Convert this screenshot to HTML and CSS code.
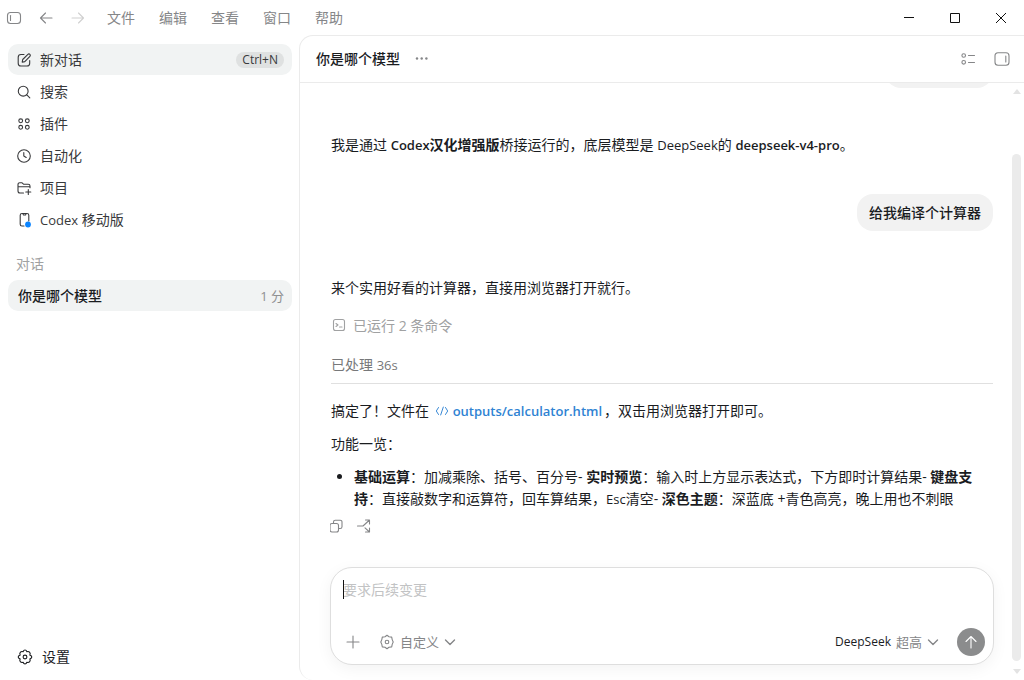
FILE: index.html
```
<!DOCTYPE html>
<html lang="zh-CN">

<head>
  <meta charset="UTF-8">
  <meta name="viewport" content="width=device-width, initial-scale=1.0">
  <title>你是哪个模型</title>
  <link rel="stylesheet" href="styles.css">
</head>

<body>

  <header class="titlebar">
    <button class="icon-btn" aria-label="切换侧边栏">
      <svg viewBox="0 0 16 16"><rect x="1.5" y="2.5" width="13" height="11" rx="3" /><path d="M4.5 5.5v5" /></svg>
    </button>
    <button class="icon-btn" aria-label="后退">
      <svg viewBox="0 0 16 16"><path d="M14 8H2.500M7.500 3L2.500 8l5 5" /></svg>
    </button>
    <button class="icon-btn disabled" aria-label="前进">
      <svg viewBox="0 0 16 16"><path d="M2 8h11.500M8.500 3l5 5-5 5" /></svg>
    </button>
    <nav class="menu">
      <button>文件</button>
      <button>编辑</button>
      <button>查看</button>
      <button>窗口</button>
      <button>帮助</button>
    </nav>
    <div class="window-controls">
      <button aria-label="最小化"><svg viewBox="0 0 12 12"><path d="M1 5.500h10" /></svg></button>
      <button aria-label="最大化"><svg viewBox="0 0 12 12"><rect x="1.5" y="1.5" width="9" height="9" /></svg></button>
      <button aria-label="关闭"><svg viewBox="0 0 12 12"><path d="M1 1l10 10M11 1L1 11" /></svg></button>
    </div>
  </header>

  <div class="layout">
    <aside class="sidebar">
      <nav class="nav-list">
        <a href="#" class="nav-item active">
          <svg viewBox="0 0 16 16"><path d="M8 2.500H5A2.800 2.800 0 0 0 2.200 5.300v5.900A2.800 2.800 0 0 0 5 14h5.900a2.800 2.800 0 0 0 2.800-2.800V8.500" /><path d="M6.200 10.200l.5-2.700 5.200-5.200a1.400 1.400 0 0 1 2 2L8.800 9.600z" /></svg>
          <span>新对话</span>
          <kbd>Ctrl+N</kbd>
        </a>
        <a href="#" class="nav-item">
          <svg viewBox="0 0 16 16"><circle cx="7.200" cy="7.200" r="4.900" /><path d="M10.800 10.800l3 3" /></svg>
          <span>搜索</span>
        </a>
        <a href="#" class="nav-item">
          <svg viewBox="0 0 16 16"><circle cx="4.700" cy="4.800" r="1.900" /><circle cx="11.300" cy="4.800" r="1.900" /><circle cx="4.700" cy="11.300" r="1.900" /><circle cx="11.300" cy="11.300" r="1.900" /></svg>
          <span>插件</span>
        </a>
        <a href="#" class="nav-item">
          <svg viewBox="0 0 16 16"><circle cx="8" cy="8" r="6.300" /><path d="M7.800 4.500V8l2.400 1.400" /></svg>
          <span>自动化</span>
        </a>
        <a href="#" class="nav-item">
          <svg viewBox="0 0 16 16"><path d="M7.500 13H4a2 2 0 0 1-2-2V4.500A1.800 1.800 0 0 1 3.800 2.700h2l1.700 1.500h4.700a1.800 1.800 0 0 1 1.800 1.800v1.800M2 6.800h12M12.300 9.500v5M9.800 12h5" /></svg>
          <span>项目</span>
        </a>
        <a href="#" class="nav-item">
          <svg viewBox="0 0 16 16"><path d="M8 14H6a1.800 1.800 0 0 1-1.800-1.800V3.300A1.800 1.800 0 0 1 6 1.500h5a1.800 1.800 0 0 1 1.800 1.800V9M7 2l.5 1h2l.5-1" /><circle class="dot" cx="12" cy="12.500" r="2.900" /></svg>
          <span><span class="en">Codex</span> 移动版</span>
        </a>
      </nav>

      <h2 class="section-title">对话</h2>
      <a href="#" class="thread active">
        <span>你是哪个模型</span>
        <time>1 分</time>
      </a>

      <a href="#" class="settings">
        <svg viewBox="0 0 16 16"><path d="M8 1Q9.300 1 9.900 2.700 11.700 2.100 12.700 3.400 13.700 4.600 12.800 6.100 14.800 6.800 14.800 8T12.800 9.900Q13.700 11.400 12.700 12.600 11.700 13.900 9.900 13.300 9.300 15 8 15T6.100 13.300Q4.300 13.900 3.300 12.600 2.300 11.400 3.200 9.900 1.200 9.200 1.200 8T3.200 6.100Q2.300 4.600 3.300 3.400 4.300 2.100 6.100 2.700 6.700 1 8 1z" /><circle cx="8" cy="8" r="1.900" /></svg>
        <span>设置</span>
      </a>
    </aside>

    <main class="main">
      <header class="chat-header">
        <h1>你是哪个模型</h1>
        <button class="icon-btn more" aria-label="更多">
          <svg viewBox="0 0 16 16"><circle cx="3" cy="7.500" r="1.200" /><circle cx="7.700" cy="7.500" r="1.200" /><circle cx="12.400" cy="7.500" r="1.200" /></svg>
        </button>
        <div class="header-actions">
          <button class="icon-btn" aria-label="任务列表">
            <svg viewBox="0 0 16 16"><circle cx="3.700" cy="4.500" r="1.800" /><circle cx="3.700" cy="11.300" r="1.800" /><path d="M8.500 4.500H14.500M8.500 11.500H14.500" /></svg>
          </button>
          <button class="icon-btn" aria-label="切换侧栏">
            <svg viewBox="0 0 16 16"><rect x="1" y="1.700" width="14" height="12.600" rx="3" /><path d="M11.800 5v6" /></svg>
          </button>
        </div>
      </header>

      <div class="chat">
        <div class="column">
          <div class="messages">
            <div class="bubble">你是哪个模型</div>
            <div class="reply">
              <p>我是通过 <strong><span class="en">Codex</span>汉化增强版</strong>桥接运行的，底层模型是 <span class="en">DeepSeek</span>的 <strong class="en">deepseek-v4-pro</strong>。</p>
            </div>
            <div class="bubble">给我编译个计算器</div>
            <div class="reply">
              <p>来个实用好看的计算器，直接用浏览器打开就行。</p>
              <div class="command">
                <svg viewBox="0 0 16 16"><rect x="2.500" y="1.500" width="11" height="11" rx="2" /><path d="M5 5.500l2 1.500-2 1.500M8.500 9h2.500" /></svg>
                <span>已运行 2 条命令</span>
              </div>
              <div class="elapsed">已处理 <span class="en">36s</span></div>
              <p>搞定了！文件在 <a href="#" class="file-link"><svg viewBox="0 0 16 16"><path d="M4 4L1.500 8 4 12M12 4l2.500 4L12 12M9.500 3.500l-3 9" /></svg><span class="en">outputs/calculator.html</span></a>，双击用浏览器打开即可。</p>
              <p>功能一览：</p>
              <ul>
                <li><strong>基础运算</strong>：加减乘除、括号、百分号- <strong>实时预览</strong>：输入时上方显示表达式，下方即时计算结果- <strong>键盘支持</strong>：直接敲数字和运算符，回车算结果，<span class="en">Esc</span>清空- <strong>深色主题</strong>：深蓝底 +青色高亮，晚上用也不刺眼</li>
              </ul>
              <div class="reply-actions">
                <button class="icon-btn" aria-label="复制">
                  <svg viewBox="0 0 16 16"><rect x="2" y="5.500" width="8.500" height="8.500" rx="2" /><path d="M5.500 5.500V4A1.800 1.800 0 0 1 7.300 2.200h4.900A1.800 1.800 0 0 1 14 4v4.700a1.800 1.800 0 0 1-1.800 1.800h-1.700" /></svg>
                </button>
                <button class="icon-btn" aria-label="分叉">
                  <svg viewBox="0 0 16 16"><path d="M1.500 8H7L13.500 2M9.500 2h4v4M9 9.800l4.500 4.200M9.500 14h4v-4" /></svg>
                </button>
              </div>
            </div>
          </div>

          <form class="composer">
            <div class="input-wrap">
              <textarea rows="1" aria-label="消息" placeholder="要求后续变更"></textarea>
              <span class="caret"></span>
            </div>
            <div class="toolbar">
              <button type="button" class="icon-btn" aria-label="添加">
                <svg viewBox="0 0 16 16"><path d="M8 2v12M2 8h12" /></svg>
              </button>
              <button type="button" class="picker mode">
                <svg viewBox="0 0 16 16"><path d="M8 1.300l2 1.500 2.700.3.500 2.500L14.200 8l-1 2.400-.5 2.500-2.700.3-2 1.500-2-1.500-2.700-.3-.5-2.500L1.800 8l1-2.400.5-2.500L6 2.800z" /><circle cx="8" cy="8" r="1.800" /></svg>
                <span>自定义</span>
                <svg class="chevron" viewBox="0 0 12 12"><path d="M1.500 4L6 8.500 10.500 4" /></svg>
              </button>
              <button type="button" class="picker model">
                <span class="model-name">DeepSeek</span>
                <span>超高</span>
                <svg class="chevron" viewBox="0 0 12 12"><path d="M1.500 4L6 8.500 10.500 4" /></svg>
              </button>
              <button type="submit" class="send" aria-label="发送">
                <svg viewBox="0 0 16 16"><path d="M8 14V2.500M3 7.500L8 2.500l5 5" /></svg>
              </button>
            </div>
          </form>
        </div>

        <div class="scrollbar">
          <span class="arrow up"></span>
          <span class="thumb"></span>
          <span class="arrow down"></span>
        </div>
      </div>
    </main>
  </div>

</body>

</html>
```
FILE: styles.css
```
* {
  box-sizing: border-box;
  margin: 0;
  padding: 0;
}

body {
  display: flex;
  flex-direction: column;
  height: 100vh;
  overflow: hidden;
  background: #fff;
  color: #1a1c1f;
  font-family: "Open Sans", "Noto Sans CJK SC", sans-serif;
  font-size: 14px;
  line-height: 22px;
}

button,
textarea {
  border: none;
  background: none;
  color: inherit;
  font: inherit;
}

a {
  color: inherit;
  text-decoration: none;
}

svg {
  display: block;
  flex-shrink: 0;
  width: 16px;
  height: 16px;
  fill: none;
  stroke: currentColor;
  stroke-width: 1.1;
  stroke-linecap: round;
  stroke-linejoin: round;
}

strong {
  font-weight: 700;
}

.en {
  font-size: 13px;
  line-height: 1;
}

strong .en,
strong.en,
.file-link .en {
  font-weight: 600;
}

.icon-btn {
  color: #858688;
}

/* title bar */
.titlebar {
  display: flex;
  align-items: center;
  gap: 16px;
  height: 35px;
  padding-left: 6px;
}

.titlebar .disabled {
  color: #d0d0d0;
}

.menu {
  display: flex;
  gap: 24px;
  margin-left: 5px;
  color: #858688;
}

.window-controls {
  display: flex;
  margin-left: auto;
}

.window-controls button {
  display: flex;
  align-items: center;
  justify-content: center;
  width: 46px;
  height: 36px;
}

.window-controls svg {
  width: 12px;
  height: 12px;
  stroke: #111;
  stroke-width: 1;
  stroke-linecap: butt;
}

.layout {
  display: flex;
  flex: 1;
  min-height: 0;
}

/* sidebar */
.sidebar {
  display: flex;
  flex-direction: column;
  width: 299px;
  padding: 9px 7px 8px 8px;
}

.nav-list {
  display: flex;
  flex-direction: column;
  gap: 1px;
}

.nav-item {
  display: flex;
  align-items: center;
  gap: 8px;
  height: 31px;
  padding: 0 8px;
  border-radius: 10px;
  color: #38393b;
}

.active {
  background: #f1f3f3;
}

.nav-item kbd {
  margin-left: auto;
  padding: 0 6px;
  border-radius: 8px;
  background: #dfe1e1;
  font-family: "Open Sans", sans-serif;
  font-size: 12px;
  line-height: 16px;
}

.nav-item .dot {
  fill: #0a84ff;
  stroke: none;
}

.section-title {
  margin: 18px 0 5px 8px;
  color: #a0a1a2;
  font-size: 14px;
  font-weight: 400;
}

.thread {
  display: flex;
  align-items: center;
  justify-content: space-between;
  height: 31px;
  padding: 0 8px 0 10px;
  border-radius: 10px;
  font-weight: 500;
}

.thread time {
  color: #8f9091;
  font-size: 13px;
  font-weight: 400;
}

.settings {
  display: flex;
  align-items: center;
  gap: 9px;
  height: 30px;
  margin-top: auto;
  padding: 0 9px;
}

/* conversation */
.main {
  display: flex;
  flex: 1;
  flex-direction: column;
  min-width: 0;
  border-top: 1px solid #ebebeb;
  border-left: 1px solid #ebebeb;
  border-radius: 14px 0 0 14px;
}

.chat-header {
  display: flex;
  align-items: center;
  height: 47px;
  padding: 0 14px 0 16px;
  border-bottom: 1px solid #ebebeb;
}

.chat-header h1 {
  font-size: 14px;
  font-weight: 500;
}

.more {
  margin-left: 14px;
}

.more svg {
  fill: currentColor;
  stroke: none;
}

.header-actions {
  display: flex;
  gap: 18px;
  margin-left: auto;
}

.chat {
  display: flex;
  flex: 1;
  min-height: 0;
}

.column {
  display: flex;
  flex: 1;
  flex-direction: column;
  min-width: 0;
  padding: 0 18px 15px 30px;
}

.messages {
  display: flex;
  flex: 1;
  flex-direction: column;
  justify-content: flex-end;
  min-height: 0;
  padding: 0 1px 33px;
  overflow: hidden;
}

.bubble {
  flex-shrink: 0;
  align-self: flex-end;
  padding: 8px 12px 7px;
  border-radius: 16px;
  background: #f2f2f2;
  font-weight: 500;
}

.reply {
  flex-shrink: 0;
  margin: 46px 0 38px;
}

.reply:last-child {
  margin-bottom: 0;
}

.reply p {
  margin-bottom: 11px;
}

.reply p:only-child {
  margin-bottom: 0;
}

.command {
  display: flex;
  align-items: center;
  gap: 6px;
  margin-top: 16px;
  color: #a0a1a2;
}

.elapsed {
  margin: 17px 0 16px;
  padding-bottom: 7px;
  border-bottom: 1px solid #e0e0e0;
  color: #77787a;
}

.file-link {
  margin: 0 2px;
  color: #2f83d3;
}

.file-link svg {
  display: inline-block;
  width: 14px;
  height: 14px;
  margin-right: 4px;
  vertical-align: -2px;
}

.reply ul {
  padding-left: 23px;
}

.reply-actions {
  display: flex;
  gap: 12px;
  margin: 8px 0 0 -3px;
}

/* composer */
.composer {
  flex-shrink: 0;
  padding: 11px 8px 8px 12px;
  border: 1px solid #dedede;
  border-radius: 22px;
  background: #fff;
  box-shadow: 0 4px 16px rgba(0, 0, 0, 0.05);
}

.input-wrap {
  position: relative;
}

.composer textarea {
  display: block;
  width: 100%;
  height: 22px;
  outline: none;
  resize: none;
  overflow: hidden;
}

.composer textarea::placeholder {
  color: #c2c3c4;
}

.caret {
  position: absolute;
  top: 1px;
  left: 0;
  width: 1px;
  height: 19px;
  background: #111;
}

.toolbar {
  display: flex;
  align-items: center;
  margin-top: 27px;
  padding-left: 2px;
}

.picker {
  display: flex;
  align-items: center;
  gap: 5px;
  color: #858688;
  font-size: 13px;
}

.mode {
  margin-left: 18px;
}

.model {
  margin-left: auto;
}

.model-name {
  color: #1a1c1f;
  font-size: 12px;
}

.chevron {
  width: 12px;
  height: 12px;
  stroke-width: 1.4;
}

.send {
  display: flex;
  align-items: center;
  justify-content: center;
  width: 28px;
  height: 28px;
  margin-left: 18px;
  border-radius: 50%;
  background: #8b8c8d;
  color: #fff;
}

/* scrollbar */
.scrollbar {
  display: flex;
  flex-direction: column;
  align-items: center;
  width: 9px;
  margin-right: 3px;
  padding: 6px 0;
}

.thumb {
  flex: 1;
  width: 9px;
  margin: 60px 0 8px;
  border-radius: 5px;
  background: #ebebeb;
}

.arrow {
  border: 4px solid transparent;
}

.up {
  border-top: none;
  border-bottom: 5px solid #e3e3e3;
}

.down {
  border-top: 5px solid #e3e3e3;
  border-bottom: none;
}
```
